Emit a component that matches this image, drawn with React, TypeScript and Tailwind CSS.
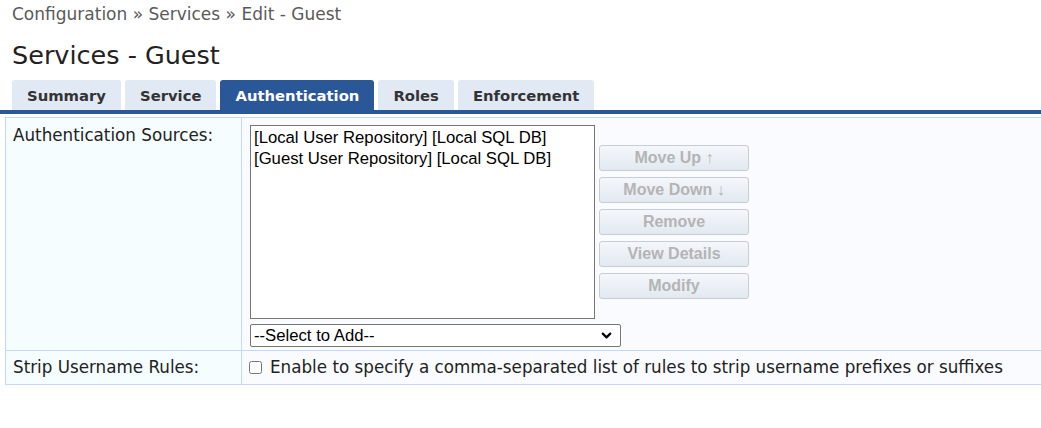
import { ChevronDown } from "lucide-react";

const tabs = ["Summary", "Service", "Authentication", "Roles", "Enforcement"];
const sources = [
  "[Local User Repository] [Local SQL DB]",
  "[Guest User Repository] [Local SQL DB]",
];
const actions = ["Move Up \u2191", "Move Down \u2193", "Remove", "View Details", "Modify"];

export default function App() {
  return (
    <div className="min-h-screen bg-white pt-[4px] font-['DejaVu_Sans',sans-serif] text-[#222]">
      {/* Breadcrumb + title */}
      <div className="px-[12px] text-[17px] leading-[20px] text-[#5a5a5a]">
        Configuration » Services » Edit - Guest
      </div>
      <h1 className="mt-[17px] px-[12px] text-[25.5px] leading-[28px] text-[#222]">Services - Guest</h1>

      {/* Tabs */}
      <nav className="mt-[11px] flex gap-[4px] pl-[12px]">
        {tabs.map((t) => (
          <div
            key={t}
            className={`rounded-t-[3px] px-[15px] pt-[6px] pb-[5px] text-[14.8px] leading-[19px] font-bold ${
              t === "Authentication" ? "bg-[#2a5797] text-white" : "bg-[#e1e9f5] text-[#333]"
            }`}
          >
            {t}
          </div>
        ))}
      </nav>
      <div className="h-[4px] bg-[#2a5797]" />

      {/* Form table */}
      <div className="ml-[5px] mt-[3px] border-t border-[#c6d8f7]">
        <div className="flex border-b border-[#c6d8f7]">
          <div className="w-[237px] shrink-0 border-l border-r border-[#c6d8f7] bg-[#f5fdff] px-[7px] pt-[6px] text-[16.75px] leading-[22px]">
            Authentication Sources:
          </div>
          <div className="flex-1 bg-[#fafbff] pl-[8px] pt-[7px] pb-[3px]">
            <div className="flex gap-[4px]">
              <div className="h-[194px] w-[345px] border border-[#767676] bg-white px-[3px] pt-[1px] font-['Liberation_Sans',sans-serif] text-[16.7px] leading-[21px] text-black">
                {sources.map((s) => (
                  <div key={s}>{s}</div>
                ))}
              </div>
              <div className="mt-[20px] flex flex-col gap-[6px]">
                {actions.map((a) => (
                  <button
                    key={a}
                    disabled
                    className="h-[26px] w-[150px] rounded-[3px] border border-[#c8cdd4] bg-gradient-to-b from-[#f4f7fb] to-[#e3e9f1] font-['Liberation_Sans',sans-serif] text-[16px] font-bold text-[#b4b4b4]"
                  >
                    {a}
                  </button>
                ))}
              </div>
            </div>
            <div className="mt-[5px] flex h-[23px] w-[371px] items-center justify-between rounded-[2px] border border-[#767676] bg-white pl-[3px] pr-[6px] font-['Liberation_Sans',sans-serif] text-[16.7px] text-black">
              <span>--Select to Add--</span>
              <ChevronDown className="h-[15px] w-[15px]" strokeWidth={3.5} />
            </div>
          </div>
        </div>
        <div className="flex border-b border-[#c6d8f7]">
          <div className="w-[237px] shrink-0 border-l border-r border-[#c6d8f7] bg-[#f5fdff] px-[7px] py-[6px] text-[16.75px] leading-[21px]">
            Strip Username Rules:
          </div>
          <div className="flex flex-1 items-center gap-[8px] bg-[#fafbff] pl-[7px] text-[16.75px] leading-[21px]">
            <input type="checkbox" className="h-[13px] w-[13px]" />
            <span>Enable to specify a comma-separated list of rules to strip username prefixes or suffixes</span>
          </div>
        </div>
      </div>
    </div>
  );
}
